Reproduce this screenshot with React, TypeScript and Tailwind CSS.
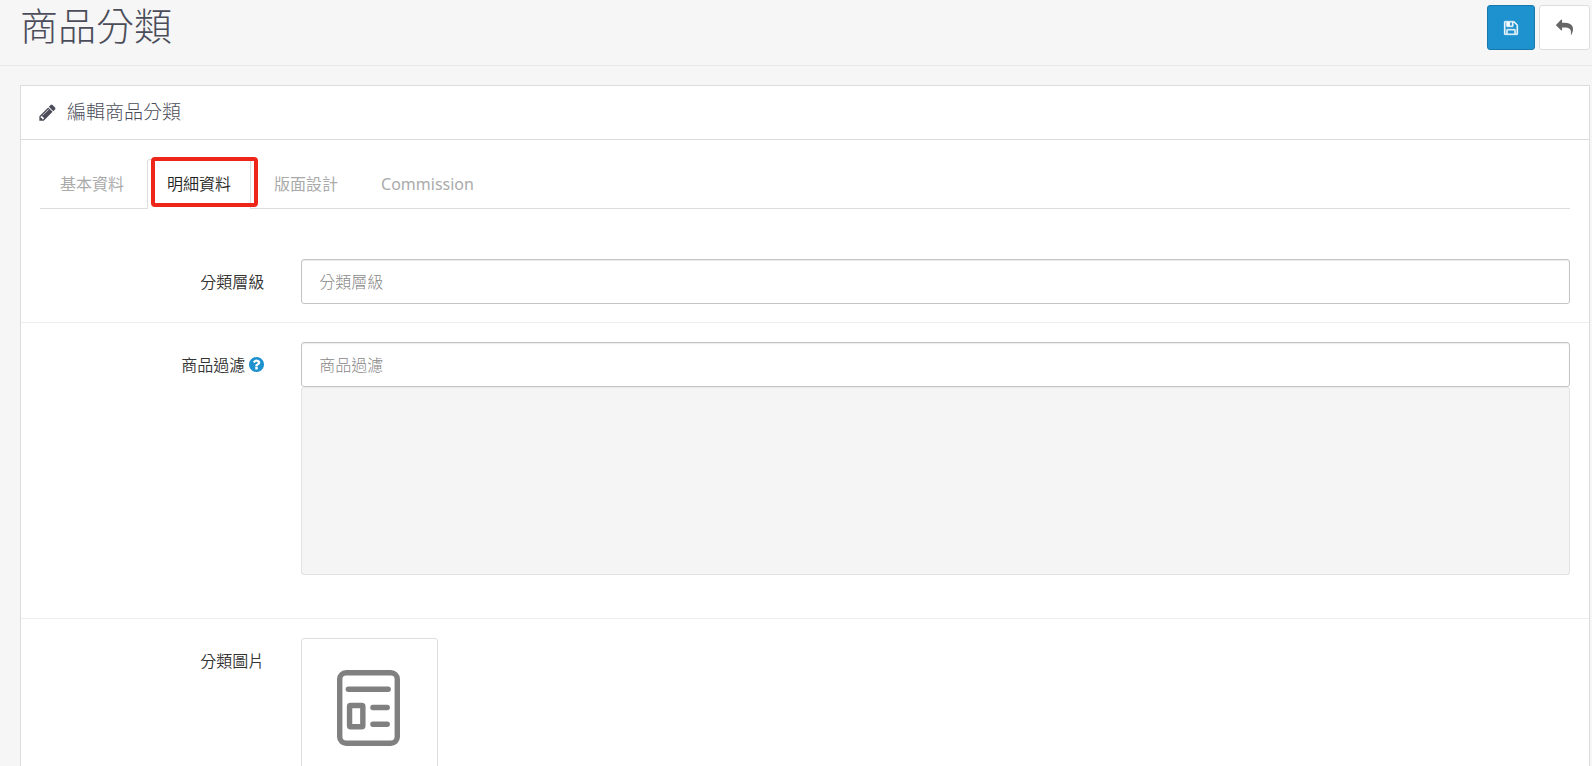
import type { ReactNode } from "react";

const tabs = ["基本資料", "明細資料", "版面設計", "Commission"];

type IconProps = {
  path: string;
  className?: string;
};

function Icon({ path, className }: IconProps) {
  return (
    <svg viewBox="0 0 1792 1792" fill="currentColor" aria-hidden="true" className={className}>
      <path d={path} />
    </svg>
  );
}

const savePath =
  "M512 1536h768v-384h-768v384zm896 0h128v-896q0-14-10-38.5t-20-34.5l-281-281q-10-10-34-20t-39-10v416q0 40-28 68t-68 28h-576q-40 0-68-28t-28-68v-416h-128v1280h128v-416q0-40 28-68t68-28h832q40 0 68 28t28 68v416zm-384-928v-320q0-13-9.5-22.5t-22.5-9.5h-192q-13 0-22.5 9.5t-9.5 22.5v320q0 13 9.5 22.5t22.5 9.5h192q13 0 22.5-9.5t9.5-22.5zm640 32v928q0 40-28 68t-68 28h-1344q-40 0-68-28t-28-68v-1344q0-40 28-68t68-28h928q40 0 88 20t76 48l280 280q28 28 48 76t20 88z";

const sharePath =
  "M1792 640q0 26-19 45l-512 512q-19 19-45 19t-45-19-19-45v-256h-224q-98 0-175.5 6t-154 21.5-133 42.5-105.5 69.5-80 101-48.5 138.5-17.5 181q0 55 5 123 0 6 2.5 23.5t2.5 26.5q0 15-8.5 25t-23.5 10q-16 0-28-17-7-9-13-22t-13.5-30-10.5-24q-127-285-127-451 0-199 53-333 162-403 875-403h224v-256q0-26 19-45t45-19 45 19l512 512q19 19 19 45z";

const pencilPath =
  "M491 1536l91-91-235-235-91 91v107h128v128h107zm523-928q0-22-22-22-10 0-17 7l-542 542q-7 7-7 17 0 22 22 22 10 0 17-7l542-542q7-7 7-17zm-54-192l416 416-832 832h-416v-416zm683 96q0 53-37 90l-166 166-416-416 166-165q36-38 90-38 53 0 91 38l235 234q37 39 37 91z";

const helpPath =
  "M1024 1376v-192q0-14-9-23t-23-9h-192q-14 0-23 9t-9 23v192q0 14 9 23t23 9h192q14 0 23-9t9-23zm256-672q0-88-55.5-163t-138.5-116-170-41q-243 0-371 213-15 24 8 42l132 100q7 6 19 6 16 0 25-12 53-68 86-92 34-24 86-24 48 0 85.5 26t37.5 59q0 38-20 61t-68 45q-63 28-115.5 86.5t-52.5 125.5v36q0 14 9 23t23 9h192q14 0 23-9t9-23q0-19 21.5-49.5t54.5-49.5q32-18 49-28.5t46-35 44.5-48 28-60.5 12.5-81zm384 192q0 209-103 385.5t-279.5 279.5-385.5 103-385.5-103-279.5-279.5-103-385.5 103-385.5 279.5-279.5 385.5-103 385.5 103 279.5 279.5 103 385.5z";

type FormRowProps = {
  label: string;
  htmlFor: string;
  help?: boolean;
  className?: string;
  children: ReactNode;
};

function FormRow({ label, htmlFor, help, className = "pb-[18px]", children }: FormRowProps) {
  return (
    <div className={`grid grid-cols-6 pt-[19px] ${className}`}>
      <label
        htmlFor={htmlFor}
        className="flex h-[45px] items-center justify-end gap-1 pr-[18px] text-base font-[350] text-[#333]"
      >
        {label}
        {help && (
          <svg viewBox="128 128 1536 1536" fill="currentColor" aria-hidden="true" className="h-[15px] w-[15px] text-[#1e91cf]">
            <path d={helpPath} />
          </svg>
        )}
      </label>
      <div className="col-span-5 px-[19px]">{children}</div>
    </div>
  );
}

function TextField({ id, placeholder }: { id: string; placeholder: string }) {
  return (
    <input
      id={id}
      type="text"
      placeholder={placeholder}
      className="block h-[45px] w-full rounded-[3px] border border-[#c4c4c4] bg-white px-[17px] text-base font-light text-[#555] shadow-[inset_0_1px_1px_rgba(0,0,0,0.08)] outline-none placeholder:text-[#888]"
    />
  );
}

function Thumbnail() {
  return (
    <button
      id="image"
      type="button"
      aria-label="分類圖片"
      className="flex h-[137px] w-[137px] items-center justify-center rounded-[3px] border border-[#ddd] bg-white pt-0.5 pr-0.5"
    >
      <svg width="63" height="76" viewBox="0 0 64 77" fill="none" stroke="#808080" strokeWidth="5.5" strokeLinecap="round">
        <rect x="2.75" y="2.75" width="58.5" height="71.5" rx="6.5" />
        <path d="M11.5 19.5H52M36.5 38H51M36.5 55H51" />
        <rect x="12.75" y="36" width="13.5" height="21.5" rx="1" />
      </svg>
    </button>
  );
}

export default function App() {
  return (
    <div className="h-screen overflow-hidden bg-[#f6f6f6] font-['Noto_Sans','Noto_Sans_CJK_TC',sans-serif]">
      <header className="flex h-[66px] items-start justify-between border-b border-[#e7e7e7] pt-[5px] pr-0.5 pl-5">
        <h1 className="text-[38px] leading-[40px] font-light text-[#4c4d5a]">商品分類</h1>
        <div className="flex gap-1">
          <button
            type="button"
            aria-label="儲存"
            className="flex h-[45px] w-12 items-center justify-center rounded-[3px] border border-[#1978ab] bg-[#1e91cf] text-white"
          >
            <Icon path={savePath} className="h-4 w-4 stroke-current stroke-[40]" />
          </button>
          <a
            href="#back"
            aria-label="返回"
            className="flex h-[45px] w-[51px] items-center justify-center rounded-[3px] border border-[#ddd] bg-white text-[#666]"
          >
            <Icon path={sharePath} className="h-[17px] w-[17px] -scale-x-100" />
          </a>
        </div>
      </header>

      <main className="mt-[19px] mr-0.5 ml-5 border border-[#dcdcdc] bg-white">
        <div className="flex h-[54px] items-center gap-2.5 border-b border-[#dcdcdc] pl-[17px] text-[#4c4d5a]">
          <Icon path={pencilPath} className="h-[19px] w-[19px]" />
          <h2 className="pb-0.5 text-[19px] leading-6 font-light">編輯商品分類</h2>
        </div>

        <nav className="mx-[19px] mt-[19px] flex gap-[3px] border-b border-[#ddd]">
          {tabs.map((tab, i) =>
            i === 1 ? (
              <a
                key={tab}
                href="#data"
                aria-current="page"
                className="relative -mb-px flex h-[50px] items-center rounded-t-[3px] border border-b-0 border-[#ddd] bg-white px-[19px] pb-0.5 text-base font-[350] text-[#222]"
              >
                {tab}
                <span className="absolute -top-[3px] left-[3px] h-[50px] w-[107px] rounded border-4 border-[#ee2519]" />
              </a>
            ) : (
              <a key={tab} href="#tab" className="flex h-[49px] items-center px-5 text-base text-[#aaa]">
                {tab}
              </a>
            ),
          )}
        </nav>

        <form className="mt-[31px]">
          <FormRow label="分類層級" htmlFor="path">
            <TextField id="path" placeholder="分類層級" />
          </FormRow>
          <div className="border-t border-[#ededed]">
            <FormRow label="商品過濾" htmlFor="filter" help className="pb-[43px]">
              <TextField id="filter" placeholder="商品過濾" />
              <div className="h-[188px] rounded-[3px] border border-t-0 border-[#e3e3e3] bg-[#f5f5f5] shadow-[inset_0_1px_1px_rgba(0,0,0,0.05)]" />
            </FormRow>
          </div>
          <div className="border-t border-[#ededed]">
            <FormRow label="分類圖片" htmlFor="image">
              <Thumbnail />
            </FormRow>
          </div>
        </form>
      </main>
    </div>
  );
}
